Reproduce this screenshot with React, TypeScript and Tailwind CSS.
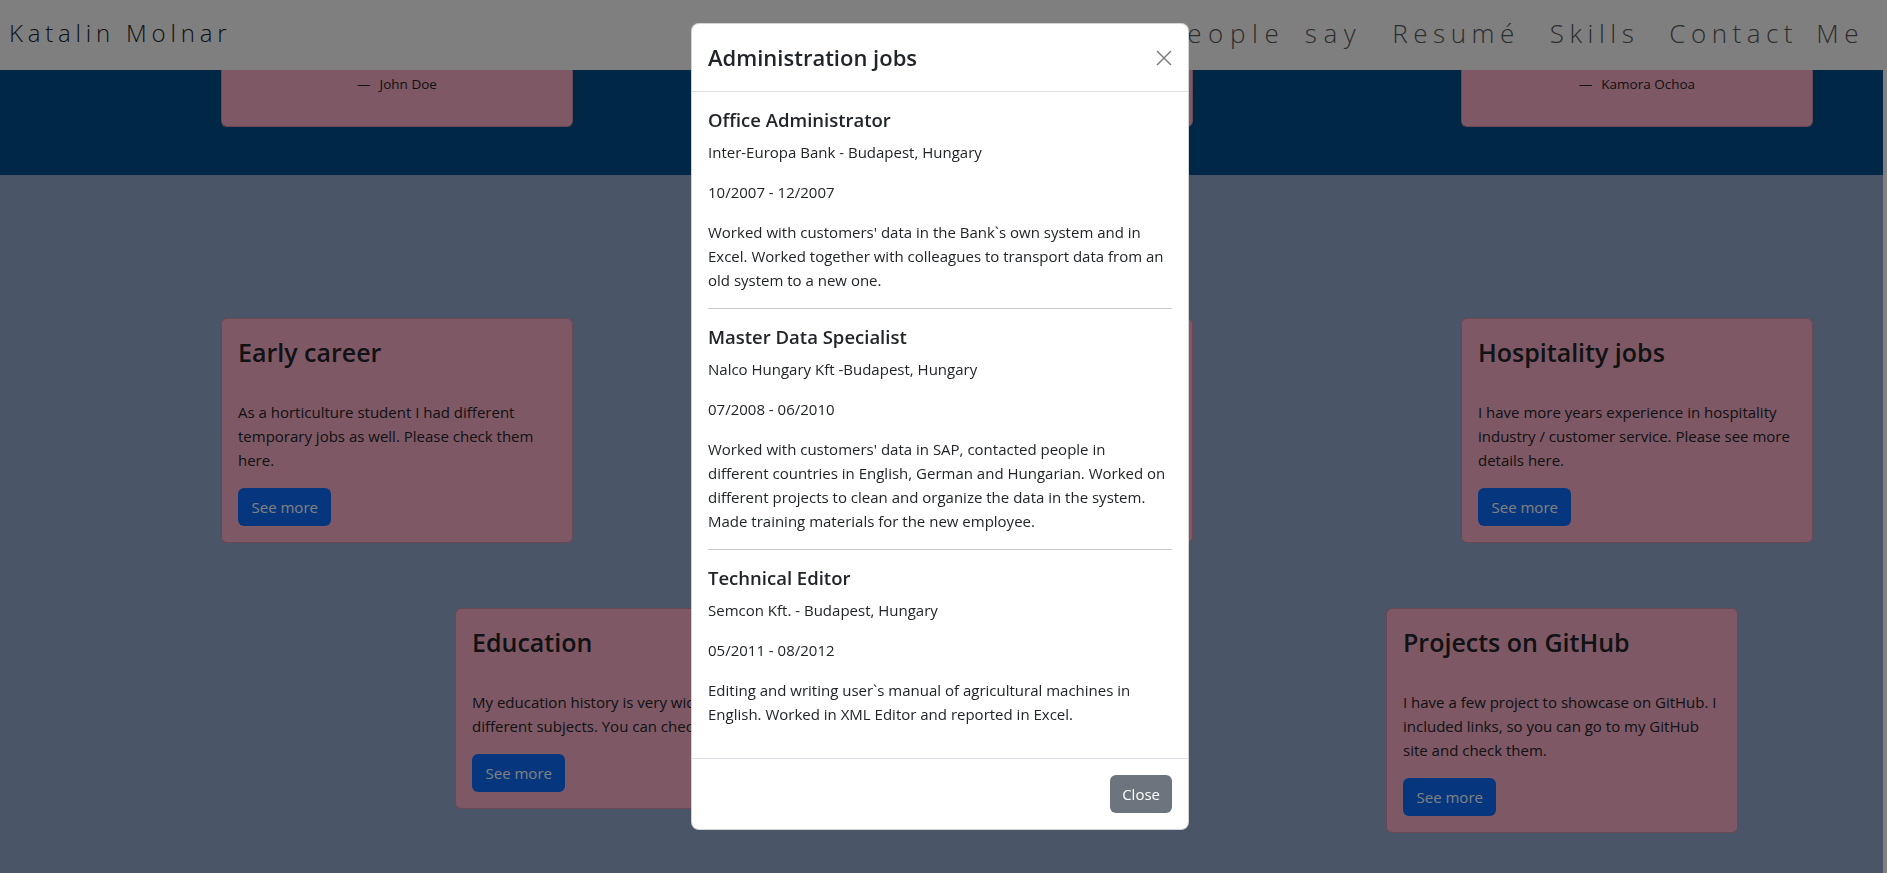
const quotes = ["John Doe", "Jane Smith", "Kamora Ochoa"];

const topCards = [
  {
    title: "Early career",
    lines: ["As a horticulture student I had different", "temporary jobs as well. Please check them", "here."],
  },
  {
    title: "Administration jobs",
    lines: ["I worked in administration for several", "years at different companies. Please see", "more details here."],
  },
  {
    title: "Hospitality jobs",
    lines: ["I have more years experience in hospitality", "industry / customer service. Please see more", "details here."],
  },
];

const bottomCards = [
  {
    title: "Education",
    lines: ["My education history is very wide with", "different subjects. You can check them here."],
  },
  {
    title: "Projects on GitHub",
    lines: ["I have a few project to showcase on GitHub. I", "included links, so you can go to my GitHub", "site and check them."],
  },
];

const jobs = [
  {
    title: "Office Administrator",
    place: "Inter-Europa Bank - Budapest, Hungary",
    date: "10/2007 - 12/2007",
    lines: [
      "Worked with customers' data in the Bank`s own system and in",
      "Excel. Worked together with colleagues to transport data from an",
      "old system to a new one.",
    ],
  },
  {
    title: "Master Data Specialist",
    place: "Nalco Hungary Kft -Budapest, Hungary",
    date: "07/2008 - 06/2010",
    lines: [
      "Worked with customers' data in SAP, contacted people in",
      "different countries in English, German and Hungarian. Worked on",
      "different projects to clean and organize the data in the system.",
      "Made training materials for the new employee.",
    ],
  },
  {
    title: "Technical Editor",
    place: "Semcon Kft. - Budapest, Hungary",
    date: "05/2011 - 08/2012",
    lines: [
      "Editing and writing user`s manual of agricultural machines in",
      "English. Worked in XML Editor and reported in Excel.",
    ],
  },
];

const Lines = ({ lines }: { lines: string[] }) => (
  <>
    {lines.map((l) => (
      <span key={l} className="block whitespace-nowrap">
        {l}
      </span>
    ))}
  </>
);

const InfoCard = ({ title, lines }: { title: string; lines: string[] }) => (
  <div className="w-[352px] rounded-md border border-black/[.175] bg-[#ffb0ca] p-4 text-[#212529]">
    <h3 className="mb-[31px] text-[25px] font-semibold leading-[34px]">{title}</h3>
    <p className="mb-4 text-[15px] leading-6">
      <Lines lines={lines} />
    </p>
    <button className="h-[38px] rounded-md bg-[#0d6efd] px-[13.5px] text-[15px] text-white">See more</button>
  </div>
);

export default function App() {
  return (
    <div className="min-h-screen w-[1883px] bg-[#94aad0] font-['Open_Sans',sans-serif] text-[#212529]">
      <header className="flex h-[70px] items-center bg-white pb-1">
        <div className="pl-[9px] text-[24px] font-light tracking-[4.8px] text-[#212529]">Katalin Molnar</div>
        <nav className="ml-auto flex gap-[30px] pr-[19px] text-[26px] font-light tracking-[5.5px] text-[#5a5a5a] [word-spacing:6px]">
          <a>About</a>
          <a className="tracking-[6.6px]">What people say</a>
          <a>Resumé</a>
          <a>Skills</a>
          <a>Contact Me</a>
        </nav>
      </header>

      <section className="h-[105px] bg-[#004e8c]">
        <div className="flex gap-[268px] pl-[221px]">
          {quotes.map((name) => (
            <div
              key={name}
              className="h-[57px] w-[352px] rounded-b-md border-x border-b border-black/[.175] bg-[#ffb0ca] pt-[4px] text-center text-[13.5px] text-[#212529]"
            >
              <span className="mr-[9px]">—</span>
              {name}
            </div>
          ))}
        </div>
      </section>

      <section className="pb-10 pt-[143px]">
        <div className="flex items-start gap-[268px] pl-[221px]">
          {topCards.map((c) => (
            <InfoCard key={c.title} {...c} />
          ))}
        </div>
        <div className="mt-[65px] flex items-start gap-[579px] pl-[455px]">
          {bottomCards.map((c) => (
            <InfoCard key={c.title} {...c} />
          ))}
        </div>
      </section>

      <div className="fixed inset-0 z-50 bg-black/50">
        <div className="ml-[691px] mt-[23px] w-[498px] rounded-lg border border-black/[.175] bg-white text-[#212529]">
          <div className="flex h-[68px] items-center justify-between border-b border-[#dee2e6] px-4">
            <h4 className="text-[22px] font-semibold">Administration jobs</h4>
            <button className="flex h-4 w-4 items-center justify-center opacity-50">
              <svg viewBox="0 0 16 16" className="h-4 w-4" fill="none" stroke="#000" strokeWidth="1.5">
                <path d="M1 1l14 14M15 1L1 15" />
              </svg>
            </button>
          </div>
          <div className="p-4">
            {jobs.map((j, i) => (
              <div key={j.title}>
                {i > 0 && <hr className="my-4 border-t border-[#c8c9c9]" />}
                <h5 className="mb-2 text-[18.5px] font-semibold leading-6">{j.title}</h5>
                <p className="mb-4 text-[15px] leading-6">{j.place}</p>
                <p className="mb-4 text-[15px] leading-6">{j.date}</p>
                <p className="mb-4 text-[15px] leading-6">
                  <Lines lines={j.lines} />
                </p>
              </div>
            ))}
          </div>
          <div className="flex justify-end border-t border-[#dee2e6] p-3">
            <button className="m-1 h-[38px] rounded-md bg-[#6c757d] px-3 text-[15px] text-white">Close</button>
          </div>
        </div>
      </div>
    </div>
  );
}
